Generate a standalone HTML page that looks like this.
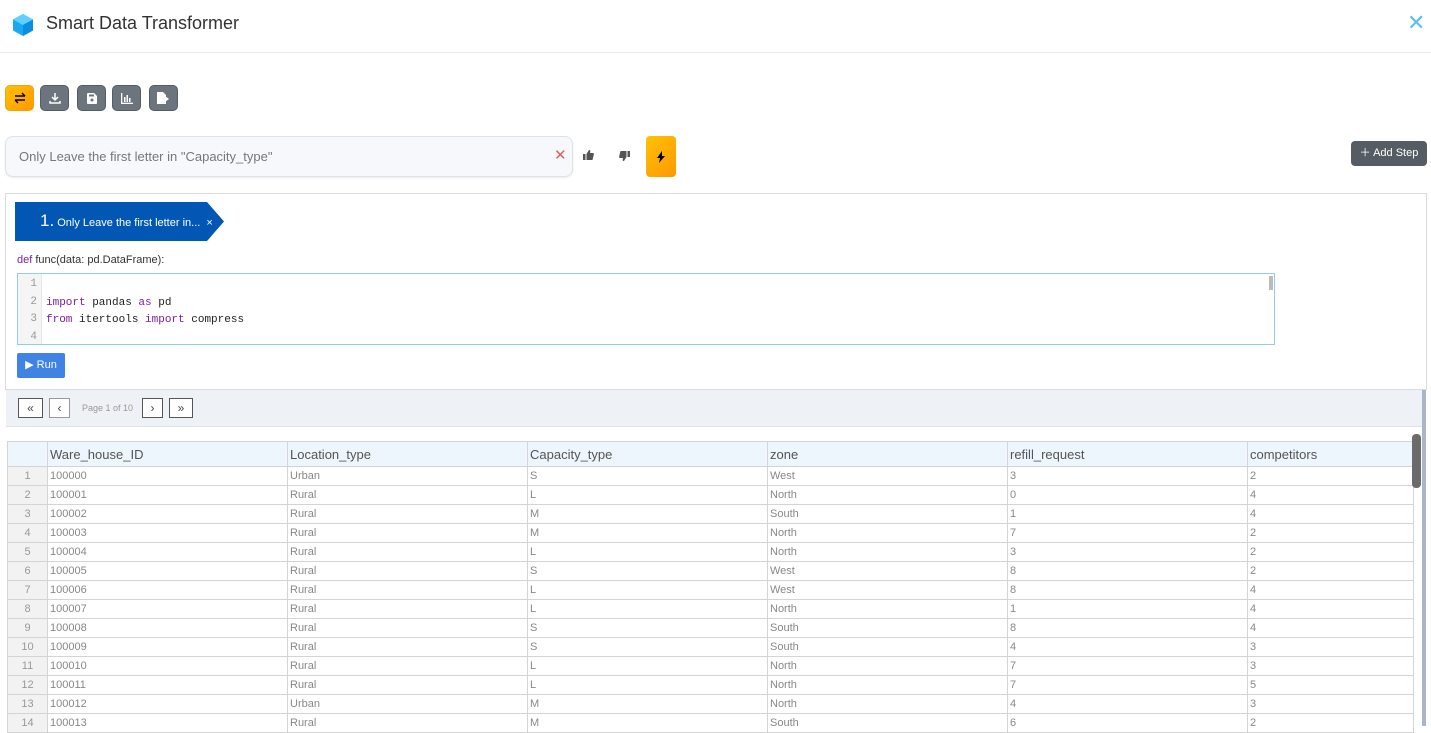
<!DOCTYPE html>
<html><head><style>
*{box-sizing:border-box;margin:0;padding:0}
body{width:1431px;height:726px;overflow:hidden;background:#fff;font-family:"Liberation Sans",sans-serif;position:relative}
.abs{position:absolute}
.hdr{left:0;top:0;width:1431px;height:53px;border-bottom:1px solid #e3e8ee}
.title{left:46px;top:13px;font-size:18px;color:#333}
.tb{top:85px;width:29px;height:26px;border-radius:5px;background:#6c757d;border:1px solid #555c63;display:flex;align-items:center;justify-content:center}
.inp{left:5px;top:136px;width:568px;height:41px;border:1px solid #dde2ea;border-radius:8px;background:#f6f8fb;box-shadow:0 1px 2px rgba(0,0,0,.08);font-size:13px;color:#777;padding:12px 13px}
.panel{left:5px;top:193px;width:1422px;height:197px;border:1px solid #d8dbe0}
.code{left:17px;top:273px;width:1258px;height:72px;border:1px solid #8fd0e8;font-family:"Liberation Mono",monospace;font-size:11px}
.gut{left:0;top:0;width:24px;height:70px;background:#f5f5f5;border-right:1px solid #e6e6e6;color:#999;text-align:right;padding-right:4px}
.ln{height:17.5px;line-height:17.5px}
.kw{color:#7a1e9c}
.pg{left:6px;top:390px;width:1416px;height:37px;background:#eef1f5;border-bottom:1px solid #dde2e8}
.pb{top:398px;height:20px;border:1px solid #555;background:#fff;font-size:12px;display:flex;align-items:center;justify-content:center;color:#444}
table{position:absolute;left:7px;top:441px;border-collapse:collapse;table-layout:fixed;font-size:11px;color:#888}
td{border:1px solid #d4d4d4;height:19px;padding:0 2px;white-space:nowrap;overflow:hidden;line-height:17px}
tr.h td{height:25px;background:#edf5fd;color:#555;font-size:13px}
td.n{background:#f2f2f2;text-align:center;color:#999;width:40px}
tr.h td.n{background:#edf5fd}
</style></head><body>
<div class="abs hdr"></div>
<svg class="abs" style="left:12px;top:13px" width="22" height="24" viewBox="0 0 22 24"><polygon points="11,1 21,6.5 21,17.5 11,23 1,17.5 1,6.5" fill="#1ba8f0"/><polygon points="11,1 21,6.5 11,12 1,6.5" fill="#5fd0ff"/><polygon points="11,12 21,6.5 21,17.5 11,23" fill="#0a8fdc"/></svg>
<div class="abs title">Smart Data Transformer</div>
<div class="abs" style="left:1407px;top:10px;font-size:22px;color:#5bc0eb">✕</div>

<div class="abs tb" style="left:5px;background:linear-gradient(135deg,#ffc107,#ff9800);border-color:#f0a500"><svg width="12" height="12" viewBox="0 0 12 12" fill="none" stroke="#000" stroke-width="1.4"><path d="M1 4h10M8 1l3 3M11 8H1M4 11L1 8"/></svg></div>
<div class="abs tb" style="left:40px"><svg width="12" height="12" viewBox="0 0 12 12" fill="none" stroke="#fff" stroke-width="1.5"><path d="M6 1v7M3 5l3 3 3-3M1 9v2h10V9"/></svg></div>
<div class="abs tb" style="left:77px"><svg width="10" height="11" viewBox="0 0 10 11"><path d="M0 1a1 1 0 011-1h6l3 3v7a1 1 0 01-1 1H1a1 1 0 01-1-1z" fill="#fff"/><circle cx="5" cy="7" r="1.5" fill="#6c757d"/><rect x="2" y="1.5" width="5" height="2" fill="#6c757d"/></svg></div>
<div class="abs tb" style="left:112px"><svg width="12" height="11" viewBox="0 0 12 11" fill="#fff"><rect x="0" y="0" width="1.3" height="11"/><rect x="0" y="9.7" width="12" height="1.3"/><rect x="3" y="4" width="1.5" height="5"/><rect x="5.5" y="2" width="1.5" height="7"/><rect x="8" y="5" width="1.5" height="4"/></svg></div>
<div class="abs tb" style="left:149px"><svg width="13" height="12" viewBox="0 0 13 12" fill="#fff"><path d="M0 0h6l3 3v9H0z"/><path d="M8 4l4 3-4 3z"/></svg></div>

<div class="abs inp">Only Leave the first letter in "Capacity_type"</div>
<div class="abs" style="left:554px;top:146px;color:#e06060;font-size:15px">✕</div>
<svg class="abs" style="left:583px;top:150px" width="11" height="10" viewBox="0 0 11 10" fill="#555"><rect x="0" y="4" width="2.5" height="6"/><path d="M3.5 4L6 0c1.5 0 1.5 1 1 3h3c1 0 1 1 .7 2L9.5 10h-6z"/></svg>
<svg class="abs" style="left:619px;top:151px" width="11" height="10" viewBox="0 0 11 10" fill="#555"><rect x="8.5" y="0" width="2.5" height="6"/><path d="M7.5 6L5 10c-1.5 0-1.5-1-1-3H1C0 7 0 6 .3 5L1.5 0h6z"/></svg>
<div class="abs" style="left:646px;top:136px;width:30px;height:41px;border-radius:4px;background:linear-gradient(135deg,#ffc107,#ff9800);display:flex;align-items:center;justify-content:center"><svg width="8" height="12" viewBox="0 0 8 12"><path d="M5 0L0 7h3l-1 5 6-7H5z" fill="#000"/></svg></div>
<div class="abs" style="left:1351px;top:141px;width:76px;height:25px;border-radius:4px;background:#555c63;color:#fff;font-size:11px;line-height:25px;text-align:center">＋ Add Step</div>

<div class="abs panel"></div>
<svg class="abs" style="left:15px;top:202px" width="210" height="39"><polygon points="0,0 192,0 209,19.5 192,39 0,39" fill="#0157b3"/></svg>
<div class="abs" style="left:40px;top:211px;color:#fff;font-size:11px"><span style="font-size:17px">1.</span> Only Leave the first letter in... &nbsp;×</div>
<div class="abs" style="left:17px;top:254px;font-size:11px;color:#333"><span class="kw">def</span> func(data: pd.DataFrame):</div>
<div class="abs code">
<div class="abs gut"><div class="ln" style="margin-top:2px">1</div><div class="ln">2</div><div class="ln">3</div><div class="ln">4</div></div>
<div class="abs" style="left:28px;top:3px;color:#222"><div class="ln"></div><div class="ln"><span class="kw">import</span> pandas <span class="kw">as</span> pd</div><div class="ln"><span class="kw">from</span> itertools <span class="kw">import</span> compress</div></div>
<div class="abs" style="right:1px;top:2px;width:4px;height:14px;background:#bbb"></div>
</div>
<div class="abs" style="left:17px;top:353px;width:48px;height:25px;background:#3f84e5;border-radius:2px;color:#fff;font-size:11px;line-height:25px;text-align:center">▶ Run</div>

<div class="abs pg"></div>
<div class="abs pb" style="left:18px;width:25px">«</div>
<div class="abs pb" style="left:49px;width:21px;border-color:#999">‹</div>
<div class="abs" style="left:82px;top:403px;font-size:9px;color:#999">Page 1 of 10</div>
<div class="abs pb" style="left:142px;width:21px">›</div>
<div class="abs pb" style="left:169px;width:24px">»</div>
<div class="abs" style="left:1422px;top:390px;width:4px;height:336px;background:#a9b6c8"></div>

<table>
<colgroup><col style="width:40px"><col style="width:240px"><col style="width:240px"><col style="width:240px"><col style="width:240px"><col style="width:240px"><col style="width:166px"></colgroup>
<tr class="h"><td class="n"></td><td>Ware_house_ID</td><td>Location_type</td><td>Capacity_type</td><td>zone</td><td>refill_request</td><td>competitors</td></tr>
<tr><td class="n">1</td><td>100000</td><td>Urban</td><td>S</td><td>West</td><td>3</td><td>2</td></tr>
<tr><td class="n">2</td><td>100001</td><td>Rural</td><td>L</td><td>North</td><td>0</td><td>4</td></tr>
<tr><td class="n">3</td><td>100002</td><td>Rural</td><td>M</td><td>South</td><td>1</td><td>4</td></tr>
<tr><td class="n">4</td><td>100003</td><td>Rural</td><td>M</td><td>North</td><td>7</td><td>2</td></tr>
<tr><td class="n">5</td><td>100004</td><td>Rural</td><td>L</td><td>North</td><td>3</td><td>2</td></tr>
<tr><td class="n">6</td><td>100005</td><td>Rural</td><td>S</td><td>West</td><td>8</td><td>2</td></tr>
<tr><td class="n">7</td><td>100006</td><td>Rural</td><td>L</td><td>West</td><td>8</td><td>4</td></tr>
<tr><td class="n">8</td><td>100007</td><td>Rural</td><td>L</td><td>North</td><td>1</td><td>4</td></tr>
<tr><td class="n">9</td><td>100008</td><td>Rural</td><td>S</td><td>South</td><td>8</td><td>4</td></tr>
<tr><td class="n">10</td><td>100009</td><td>Rural</td><td>S</td><td>South</td><td>4</td><td>3</td></tr>
<tr><td class="n">11</td><td>100010</td><td>Rural</td><td>L</td><td>North</td><td>7</td><td>3</td></tr>
<tr><td class="n">12</td><td>100011</td><td>Rural</td><td>L</td><td>North</td><td>7</td><td>5</td></tr>
<tr><td class="n">13</td><td>100012</td><td>Urban</td><td>M</td><td>North</td><td>4</td><td>3</td></tr>
<tr><td class="n">14</td><td>100013</td><td>Rural</td><td>M</td><td>South</td><td>6</td><td>2</td></tr>
</table>
<div class="abs" style="left:1412px;top:434px;width:9px;height:54px;border-radius:4px;background:#6b6b6b"></div>
</body></html>
